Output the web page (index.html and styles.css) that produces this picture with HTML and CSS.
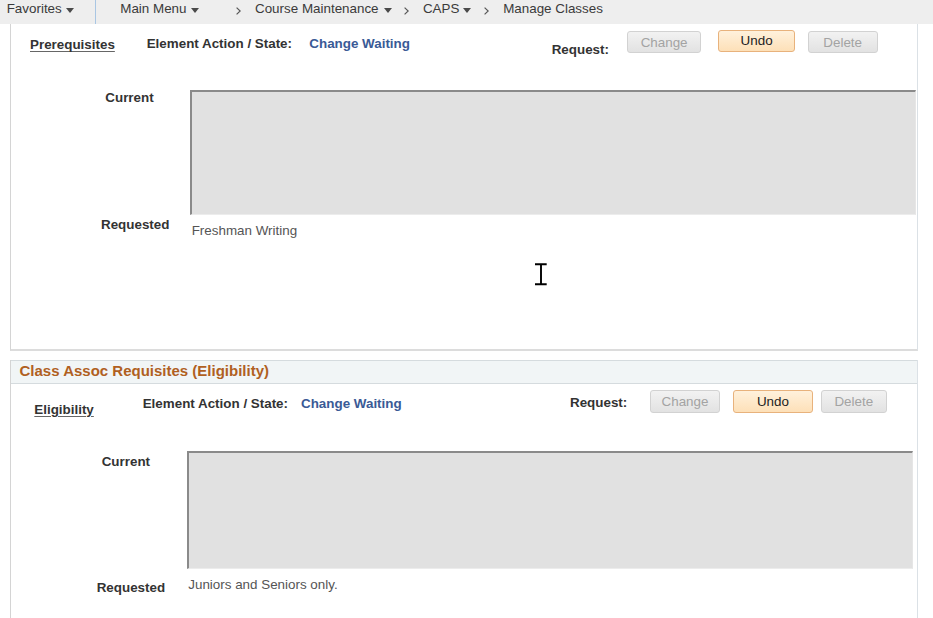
FILE: index.html
```html
<!DOCTYPE html>
<html lang="en">
<head>
<meta charset="utf-8">
<title>Manage Classes</title>
<link rel="stylesheet" href="styles.css">
</head>
<body>
<div class="topbar">
  <div class="crumb crumb--fav"><span>Favorites</span><span class="caret"></span></div>
  <div class="topbar-divider"></div>
  <div class="crumb crumb--main"><span>Main Menu</span><span class="caret"></span></div>
  <div class="crumb crumb--course"><svg class="chevron" viewBox="0 0 5 8"><polyline points="0.6,0.6 4.2,4 0.6,7.4" fill="none" stroke="#555" stroke-width="1.2"/></svg><span>Course Maintenance</span><span class="caret caret--wide"></span></div>
  <div class="crumb crumb--caps"><svg class="chevron" viewBox="0 0 5 8"><polyline points="0.6,0.6 4.2,4 0.6,7.4" fill="none" stroke="#555" stroke-width="1.2"/></svg><span>CAPS</span><span class="caret"></span></div>
  <div class="crumb crumb--manage"><svg class="chevron" viewBox="0 0 5 8"><polyline points="0.6,0.6 4.2,4 0.6,7.4" fill="none" stroke="#555" stroke-width="1.2"/></svg><span>Manage Classes</span></div>
</div>

<div class="panel panel--first">
  <div class="action-row action-row--prereq">
    <a class="sub-link" href="#">Prerequisites</a>
    <span class="state-label">Element Action / State:</span>
    <span class="state-value">Change Waiting</span>
    <span class="request-label">Request:</span>
    <button class="btn btn-change" type="button">Change</button>
    <button class="btn btn-undo btn--primary" type="button">Undo</button>
    <button class="btn btn-delete" type="button">Delete</button>
  </div>
  <div class="fields fields--prereq">
    <span class="field-label label-current">Current</span>
    <div class="textbox"></div>
    <span class="field-label label-requested">Requested</span>
    <span class="field-value">Freshman Writing</span>
  </div>
</div>

<div class="panel panel--second">
  <div class="section-header">Class Assoc Requisites (Eligibility)</div>
  <div class="action-row action-row--elig">
    <a class="sub-link" href="#">Eligibility</a>
    <span class="state-label">Element Action / State:</span>
    <span class="state-value">Change Waiting</span>
    <span class="request-label">Request:</span>
    <button class="btn btn-change" type="button">Change</button>
    <button class="btn btn-undo btn--primary" type="button">Undo</button>
    <button class="btn btn-delete" type="button">Delete</button>
  </div>
  <div class="fields fields--elig">
    <span class="field-label label-current">Current</span>
    <div class="textbox"></div>
    <span class="field-label label-requested">Requested</span>
    <span class="field-value">Juniors and Seniors only.</span>
  </div>
</div>

<svg class="cursor" viewBox="0 0 15 24"><path d="M2 2.2h11.7M8 2.2v20M2 22.2h11.7" fill="none" stroke="#000" stroke-width="1.9"/></svg>
</body>
</html>
```

FILE: styles.css
```css
* { box-sizing: border-box; }
html, body { margin: 0; padding: 0; }
body {
  position: relative;
  width: 933px;
  height: 618px;
  overflow: hidden;
  background: #ffffff;
  font-family: "Liberation Sans", Arial, sans-serif;
  font-size: 13.4px;
  line-height: 16px;
  color: #333333;
}

/* top navigation */
.topbar {
  display: flex;
  align-items: flex-start;
  height: 24px;
  background: #eeeeee;
  color: #3a3a3a;
}
.crumb {
  display: flex;
  align-items: flex-start;
  padding-top: 1px;
  white-space: nowrap;
}
.crumb--fav { margin-left: 6.7px; }
.topbar-divider {
  align-self: stretch;
  width: 1px;
  margin-left: 21px;
  background: #a9c6e3;
}
.crumb--main { margin-left: 24.5px; }
.crumb--course { margin-left: 37.7px; }
.crumb--caps { margin-left: 12px; }
.crumb--manage { margin-left: 13px; }
.caret {
  width: 0;
  height: 0;
  margin-left: 4px;
  margin-top: 6.5px;
  border-left: 4px solid transparent;
  border-right: 4px solid transparent;
  border-top: 5px solid #4a4a4a;
}
.caret--wide { margin-left: 5.5px; }
.chevron {
  width: 5px;
  height: 8px;
  margin-top: 6px;
  margin-right: 13.8px;
}

/* panels */
.panel {
  margin-left: 10px;
  width: 908px;
  border-left: 1px solid #d4d4d4;
  border-right: 1px solid #dbe1e6;
}
.panel--first {
  height: 327px;
  border-bottom: 2px solid #dcdcdc;
}
.panel--second {
  margin-top: 9px;
  height: 258px;
}
.section-header {
  height: 24px;
  padding-left: 8.5px;
  background: #f1f5f6;
  border-top: 1px solid #d5dbde;
  border-bottom: 1px solid #d5dbde;
  font-size: 15px;
  font-weight: bold;
  line-height: 20px;
  color: #b0601f;
}

/* action rows */
.action-row {
  display: grid;
  align-items: start;
  padding-top: 6px;
}
.action-row--prereq {
  height: 66.3px;
  padding-left: 19px;
  grid-template-columns: 116.7px 162.6px 242.4px 75.6px 91px 89.4px 70px;
}
.action-row--elig {
  height: 66.7px;
  padding-left: 23.3px;
  grid-template-columns: 108.4px 158.3px 269px 80px 82.7px 88.3px 66px;
}
.sub-link {
  font-weight: bold;
  color: #333333;
  text-decoration: underline;
  text-decoration-color: #666666;
  text-underline-offset: 2px;
  white-space: nowrap;
}
.state-label,
.request-label {
  font-weight: bold;
  white-space: nowrap;
}
.state-value {
  font-weight: bold;
  color: #3a5a96;
  white-space: nowrap;
}
.btn {
  height: 22.3px;
  padding: 0;
  border: 1px solid #d2d2d2;
  border-radius: 3px;
  background: linear-gradient(#f2f2f2, #e2e2e2);
  font-family: "Liberation Sans", Arial, sans-serif;
  font-size: 13.4px;
  line-height: 19px;
  color: #a3a3a3;
  text-align: center;
}
.btn--primary {
  border-color: #e8b27c;
  background: linear-gradient(#fff1dc, #fde0b8);
  color: #222222;
}

.action-row--prereq .sub-link { margin-top: 7.35px; }
.action-row--prereq .state-label,
.action-row--prereq .state-value { margin-top: 6.35px; }
.action-row--prereq .request-label { margin-top: 11.65px; }
.action-row--prereq .btn-change { margin-top: 1px; width: 73.7px; }
.action-row--prereq .btn-undo { width: 76.7px; padding-bottom: 1px; }
.action-row--prereq .btn-delete { margin-top: 1px; width: 70px; }

.action-row--elig .sub-link { margin-top: 11.65px; }
.action-row--elig .state-label,
.action-row--elig .state-value { margin-top: 6px; }
.action-row--elig .request-label { margin-top: 5px; }
.action-row--elig .btn { height: 22.7px; }
.action-row--elig .btn-change { width: 70px; }
.action-row--elig .btn-undo { width: 80.6px; }
.action-row--elig .btn-delete { width: 65.7px; }

/* fields */
.fields {
  display: grid;
  align-items: start;
}
.fields--prereq { grid-template-columns: 179px 726px; }
.fields--elig { grid-template-columns: 175.7px 726px; }
.field-label {
  font-weight: bold;
  white-space: nowrap;
}
.field-value {
  color: #555555;
  white-space: nowrap;
}
.textbox {
  background: #e1e1e1;
  border-top: 2px solid #8a8a8a;
  border-left: 2px solid #8a8a8a;
  border-right: 1px solid #e6e6e6;
  border-bottom: 1px solid #ececec;
}
.fields--prereq .textbox { height: 124.3px; }
.fields--prereq .label-current { padding-left: 94.3px; }
.fields--prereq .label-requested { padding-left: 90px; margin-top: 2.35px; }
.fields--prereq .field-value { padding-left: 1.7px; margin-top: 8.35px; }

.fields--elig .textbox { height: 118.3px; }
.fields--elig .label-current { padding-left: 90.7px; margin-top: 3.3px; }
.fields--elig .label-requested { padding-left: 85.7px; margin-top: 11px; }
.fields--elig .field-value { padding-left: 1.6px; margin-top: 7.65px; }

/* mouse pointer overlay */
.cursor {
  position: absolute;
  left: 533px;
  top: 262px;
  width: 15px;
  height: 24px;
}
```
